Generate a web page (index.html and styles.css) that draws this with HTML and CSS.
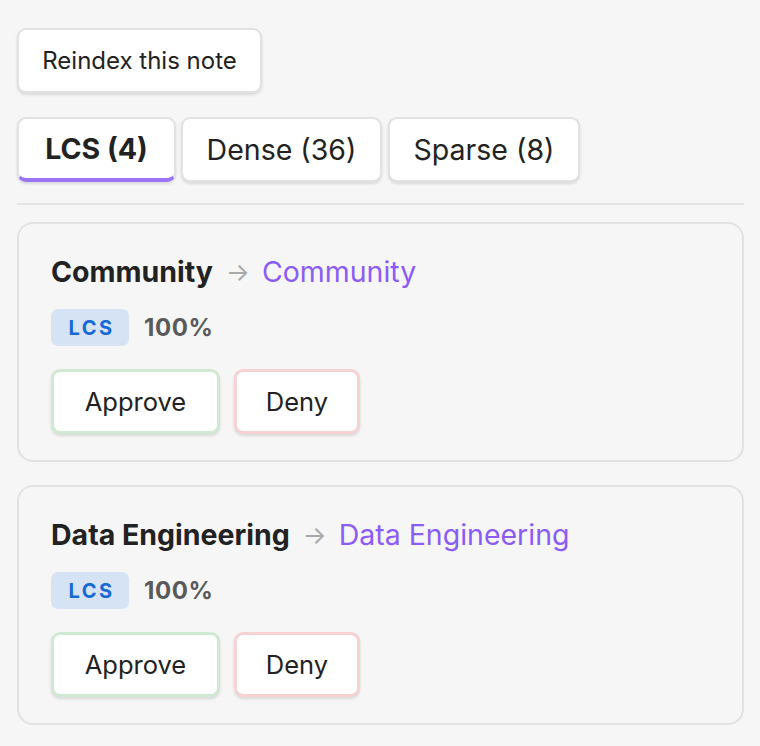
FILE: index.html
```html
<!DOCTYPE html>
<html>
<head>
<meta charset="utf-8">
<link rel="stylesheet" href="styles.css">
</head>
<body>
<div class="page">
  <div class="top">
    <button class="btn reindex">Reindex this note</button>
  </div>
  <div class="tabs">
    <button class="btn tab active">LCS (4)</button>
    <button class="btn tab">Dense (36)</button>
    <button class="btn tab">Sparse (8)</button>
  </div>
  <div class="divider"></div>
  <div class="list">
    <div class="card">
      <div class="title"><span class="src">Community</span><span class="arrow">→</span><span class="dst">Community</span></div>
      <div class="meta"><span class="badge">LCS</span><span class="score">100%</span></div>
      <div class="actions"><button class="btn approve">Approve</button><button class="btn deny">Deny</button></div>
    </div>
    <div class="card">
      <div class="title"><span class="src">Data Engineering</span><span class="arrow">→</span><span class="dst">Data Engineering</span></div>
      <div class="meta"><span class="badge">LCS</span><span class="score">100%</span></div>
      <div class="actions"><button class="btn approve">Approve</button><button class="btn deny">Deny</button></div>
    </div>
  </div>
</div>
</body>
</html>
```
FILE: styles.css
```css
html, body {
  margin: 0;
  padding: 0;
  background: #f6f6f6;
}
body {
  font-family: Inter, "Noto Sans", sans-serif;
  color: #222;
}
.page {
  padding: 28px 16px 0 17px;
  display: flex;
  flex-direction: column;
}
.btn {
  font-family: Inter, "Noto Sans", sans-serif;
  background: #fff;
  color: #222;
  border: 2px solid #e2e2e2;
  border-radius: 9px;
  box-shadow: 0 2px 3px rgba(0,0,0,0.12);
  cursor: pointer;
  box-sizing: border-box;
  padding: 0;
}
.top {
  display: flex;
}
.reindex {
  height: 65px;
  width: 245px;
  font-size: 24px;
}
.tabs {
  margin-top: 24px;
  display: flex;
  gap: 5px;
}
.tab {
  height: 65px;
  font-size: 28.5px;
  padding: 0;
}
.tab.active {
  font-weight: 700;
  width: 159px;
  border-bottom: 4px solid #9b73f5;
}
.tabs .tab:nth-child(2) { width: 201px; }
.tabs .tab:nth-child(3) { width: 192px; margin-left: 1px; }
.divider {
  margin-top: 21px;
  height: 2px;
  background: #e3e3e3;
}
.list {
  margin-top: 17px;
  display: flex;
  flex-direction: column;
  gap: 23px;
}
.card {
  border: 2px solid #e2e2e2;
  border-radius: 16px;
  padding: 28px 32px 26px 32px;
  display: flex;
  flex-direction: column;
}
.title {
  font-size: 28.5px;
  line-height: 40px;
  display: flex;
  align-items: center;
}
.src {
  font-weight: 700;
  color: #222;
}
.arrow {
  color: #a8a8a8;
  margin: 0 12px 0 13px;
  font-size: 25px;
}
.dst {
  color: #8b5cf6;
}
.meta {
  margin-top: 17px;
  display: flex;
  align-items: center;
  gap: 15px;
}
.badge {
  background: #d6e3f5;
  color: #1769d6;
  font-weight: 700;
  font-size: 20px;
  letter-spacing: 2.5px;
  width: 78px;
  height: 37px;
  border-radius: 7px;
  display: flex;
  align-items: center;
  justify-content: center;
  box-sizing: border-box;
  padding-left: 3px;
}
.score {
  font-size: 24px;
  font-weight: 700;
  color: #5a5a5a;
  letter-spacing: 0.6px;
}
.actions {
  margin-top: 23px;
  display: flex;
  gap: 14px;
}
.approve, .deny {
  height: 65px;
  font-size: 25.5px;
  border-width: 3px;
}
.approve {
  width: 169px;
  border-color: #d0e9d2;
}
.deny {
  width: 126px;
  border-color: #f6d2d3;
}
```
